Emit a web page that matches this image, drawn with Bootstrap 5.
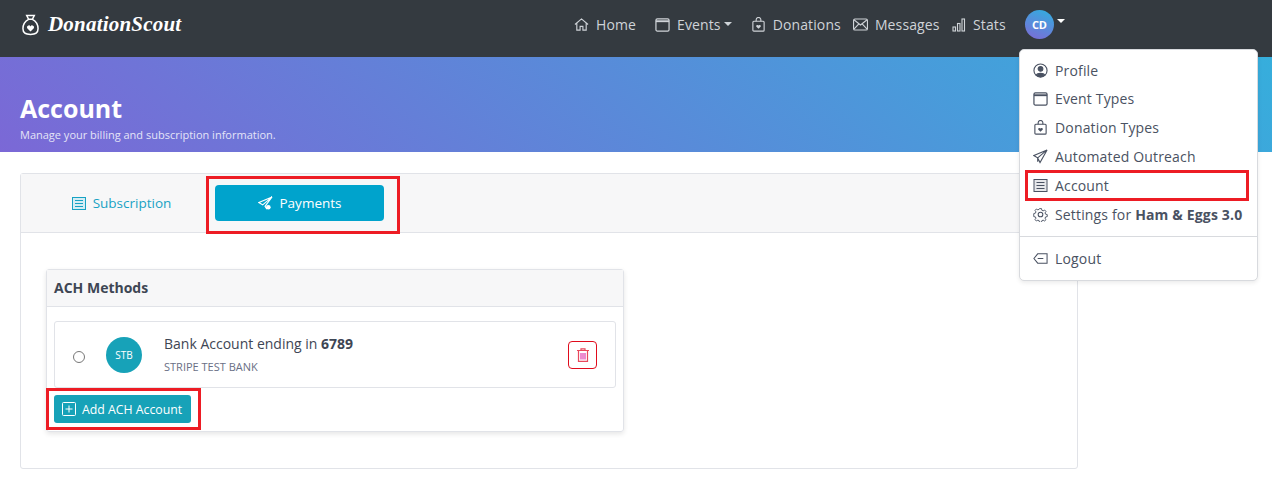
<!DOCTYPE html>
<html lang="en"><head><meta charset="utf-8"><title>Account</title>
<link href="https://cdn.jsdelivr.net/npm/bootstrap@5.3.0/dist/css/bootstrap.min.css" rel="stylesheet">
<style>
html,body{height:482px;overflow:hidden}
body{font-family:"Open Sans","Liberation Sans",sans-serif;font-size:14px;color:#3e4654;background:#fff}
.ds-bar{height:57px;background:#343a40;padding:0 14px 0 22px}
.ds-brand{font-family:"Liberation Serif",serif;font-style:italic;font-weight:700;font-size:21px;letter-spacing:.2px;color:#fff;gap:9px;width:552px;margin-bottom:8px}
.ds-nav{font-size:14px;letter-spacing:.12px;color:#cfd3d8;line-height:20px;padding-bottom:8px}
.ds-nav a{color:#cfd3d8;text-decoration:none;display:flex;align-items:center;gap:7px}
.ds-nav svg{flex:none}
.ds-caret{display:inline-block;border-top:4px solid currentColor;border-left:4px solid transparent;border-right:4px solid transparent;margin-left:-4px;margin-bottom:2px}
.ds-avatar{width:29px;height:29px;border-radius:50%;background:linear-gradient(20deg,#7f69d6,#2fb0e0);color:#fff;font-size:11px;font-weight:700;line-height:29px;text-align:center;letter-spacing:-.2px}
.ds-hero{height:95px;background:linear-gradient(40deg,#7b68d6 0%,#36aedc 100%);color:#fff;padding:35px 20px 0}
.ds-hero h1{font-size:25px;font-weight:700;line-height:32px;margin:0}
.ds-hero p{font-size:11px;line-height:14px;margin:4px 0 0;color:#e4e4f7}
.ds-main{padding:21px 194px 0 20px}
.ds-outer{height:296px;border:1px solid #e1e3e8;border-radius:3px}
.ds-tabs{height:59px;background:#f7f7f8;border-bottom:1px solid #e1e3e8;padding:11px 0 0 25px;gap:18px}
.ds-tab{height:36px;width:151px;border-radius:4px;color:#17a2c4;gap:7px;font-size:13.5px;padding-top:1px}
.ds-tab.ds-on{width:169px;background:#00a3cc;color:#fff;font-weight:500}
.ds-mark{position:absolute;border:3px solid #ed1c24;pointer-events:none}
.ds-inner{width:578px;margin:36px 0 0 25px;height:163px;border:1px solid #e1e3e8;border-radius:3px;box-shadow:0 2px 5px rgba(0,0,0,.1)}
.ds-inner-h{height:37px;background:#f7f7f8;border-bottom:1px solid #e1e3e8;font-size:14px;font-weight:700;line-height:36px;padding-left:7px}
.ds-row{margin:14px 7px 7px;height:67px;border:1px solid #e1e3e8;border-radius:3px;padding-left:18px}
.ds-radio{width:12px;height:12px;border:1px solid #777;border-radius:50%;flex:none;margin:4px 21px 0 0}
.ds-stb{width:36px;height:36px;border-radius:50%;background:#17a2b8;color:#fff;font-size:10px;line-height:36px;text-align:center;flex:none;margin-right:22px}
.ds-bank{font-size:14px;line-height:18px;color:#3e4654}
.ds-sub{font-size:11px;line-height:14px;margin-top:7px;color:#6a6f85}
.ds-del{width:29px;height:28px;border:1px solid #e00b1c;border-radius:4px;background:#fff;margin:0 18px 0 auto;padding:0}
.ds-add{margin-left:7px;height:28px;width:137px;background:#17a2b8;color:#fff;border:0;border-radius:3px;font-size:12.3px;padding:2px 0 0 8px;gap:6px}
.ds-add svg{margin-top:-3px}
.ds-menu{position:absolute;left:1019px;top:49px;width:239px;height:232px;background:#fff;border:1px solid #d8dade;border-radius:5px;box-shadow:0 2px 4px rgba(0,0,0,.08);padding:5.7px 0 0;z-index:5}
.ds-item{height:28.8px;padding-left:13px;gap:7px;color:#4a5262;font-size:14px;letter-spacing:.16px;position:relative}
.ds-rule{border-top:1px solid #d8dade;margin:7.5px 0 7.5px}
</style></head><body>
<nav class="ds-bar d-flex align-items-center">
 <div class="ds-brand d-flex align-items-center">
  <svg width="17" height="24" viewBox="0 0 18 24" fill="none" stroke="#fff" stroke-width="1.6"><path d="M5 2h8l-2 4H7zM7 6C3 8 1 12 1 16c0 4 3 6 8 6s8-2 8-6c0-4-2-8-6-10"/><path fill="#fff" stroke="none" d="M9 19l-3.5-3.5a2 2 0 0 1 3.500-2 2 2 0 0 1 3.500 2z"/></svg>
  <span>DonationScout</span></div>
 <div class="ds-nav d-flex align-items-center">
  <a href="#" style="margin-right:19px"><svg width="15" height="15" viewBox="0 0 16 16" fill="none" stroke="currentColor" stroke-width="1.200"><path d="M1 8l7-6 7 6M3 6.500V14h3.500v-4h3v4H13V6.500"/></svg>Home</a>
  <a href="#" style="margin-right:19px"><svg width="15" height="15" viewBox="0 0 16 16" fill="none" stroke="currentColor" stroke-width="1.300"><rect x="1" y="2" width="14" height="13" rx="1.500"/><path stroke-width="2" d="M1 4.500h14"/></svg>Events<i class="ds-caret"></i></a>
  <a href="#" style="margin-right:12px"><svg width="15" height="15" viewBox="0 0 16 16" fill="none" stroke="currentColor" stroke-width="1.200"><rect x="2" y="4.500" width="12" height="10.500" rx="1"/><path d="M5.500 4.500V3a2.500 2.500 0 0 1 5 0v1.500"/><path fill="currentColor" stroke="none" d="M8 12.500L5.500 10a1.400 1.400 0 0 1 2.500-1 1.400 1.400 0 0 1 2.500 1z"/></svg>Donations</a>
  <a href="#" style="margin-right:12.5px"><svg width="15" height="13" viewBox="0 0 16 13" fill="none" stroke="currentColor" stroke-width="1.200"><rect x=".6" y=".6" width="14.800" height="11.800" rx="1.500"/><path d="M1 1.500l7 5.500 7-5.500M1 11.500l5-5.500M15 11.500l-5-5.500"/></svg>Messages</a>
  <a href="#" style="margin-right:19px"><svg width="14" height="14" viewBox="0 0 14 14" fill="none" stroke="currentColor" stroke-width="1.100"><rect x="1" y="9" width="2.500" height="4"/><rect x="5.500" y="5.500" width="2.500" height="7.500"/><rect x="10" y="1" width="2.500" height="12"/></svg>Stats</a>
  <a href="#" style="gap:3px;color:#fff"><span class="ds-avatar">CD</span><i class="ds-caret" style="margin:0 0 8px"></i></a>
 </div>
</nav>
<header class="ds-hero"><h1>Account</h1><p>Manage your billing and subscription information.</p></header>
<main class="ds-main">
 <section class="ds-outer">
  <div class="ds-tabs d-flex">
   <a class="ds-tab d-flex align-items-center justify-content-center text-decoration-none" href="#"><svg width="14" height="13" viewBox="0 0 14 13" fill="none" stroke="currentColor"><rect x=".5" y=".5" width="13" height="12" fill="#d5edf4"/><path d="M3 3.500h8M3 6.500h8M3 9.500h8"/></svg>Subscription</a>
   <a class="ds-tab ds-on d-flex align-items-center justify-content-center text-decoration-none position-relative" href="#"><svg width="15" height="15" viewBox="0 0 16 16" fill="none" stroke="#fff" stroke-width="1.200"><path d="M15 1L1 7l4 2.500L15 1 7.500 11l2 3"/><circle cx="11" cy="12" r="2.500" fill="#fff" stroke="none"/></svg>Payments<span class="ds-mark" style="inset:-9px -16px -13px -9px"></span></a>
  </div>
  <div class="ds-inner">
   <div class="ds-inner-h">ACH Methods</div>
   <div class="ds-row d-flex align-items-center">
    <span class="ds-radio"></span><span class="ds-stb">STB</span>
    <div><div class="ds-bank">Bank Account ending in <b>6789</b></div><div class="ds-sub">STRIPE TEST BANK</div></div>
    <button class="ds-del d-flex align-items-center justify-content-center" type="button" aria-label="Delete"><svg width="12" height="14" viewBox="0 0 12 14" fill="none" stroke="#e8485c" stroke-width="1.200"><path d="M0 2.500h12M4 2V.8h4V2M1.500 3v10.400h9V3"/><path stroke="#e040b0" d="M4 5v6.500M6 5v6.500M8 5v6.500"/></svg></button>
   </div>
   <button class="ds-add d-flex align-items-center position-relative" type="button"><svg width="14" height="14" viewBox="0 0 14 14" fill="none" stroke="#fff"><rect x=".5" y=".5" width="13" height="13" rx="1"/><path d="M7 3.500v7M3.500 7h7"/></svg>Add ACH Account<span class="ds-mark" style="inset:-7px -10px -7px -8px"></span></button>
  </div>
 </section>
</main>
<div class="ds-menu">
 <div class="ds-item d-flex align-items-center"><svg width="15" height="15" viewBox="0 0 16 16" fill="none" stroke="currentColor" stroke-width="1.200"><circle cx="8" cy="8" r="7"/><circle cx="8" cy="6.200" r="2.500" fill="currentColor"/><path fill="currentColor" d="M3.500 13c1-2.500 8-2.500 9 0-2 2-7 2-9 0z"/></svg>Profile</div>
 <div class="ds-item d-flex align-items-center"><svg width="15" height="15" viewBox="0 0 16 16" fill="none" stroke="currentColor" stroke-width="1.300"><rect x="1" y="2" width="14" height="13" rx="1.500"/><path stroke-width="2" d="M1 4.500h14"/></svg>Event Types</div>
 <div class="ds-item d-flex align-items-center"><svg width="15" height="15" viewBox="0 0 16 16" fill="none" stroke="currentColor" stroke-width="1.200"><rect x="2" y="4.500" width="12" height="10.500" rx="1"/><path d="M5.500 4.500V3a2.500 2.500 0 0 1 5 0v1.500"/><path fill="currentColor" stroke="none" d="M8 12.500L5.500 10a1.400 1.400 0 0 1 2.500-1 1.400 1.400 0 0 1 2.500 1z"/></svg>Donation Types</div>
 <div class="ds-item d-flex align-items-center"><svg width="15" height="15" viewBox="0 0 16 16" fill="none" stroke="currentColor" stroke-width="1.200"><path d="M15 1L1 7l4 2.500L15 1 7.500 14.500 5 9.500v4"/></svg>Automated Outreach</div>
 <div class="ds-item d-flex align-items-center"><svg width="15" height="13" viewBox="0 0 14 13" fill="none" stroke="currentColor"><rect x=".5" y=".5" width="13" height="12" fill="#e6e7ea"/><path d="M3 3.500h8M3 6.500h8M3 9.500h8"/></svg>Account<span class="ds-mark" style="inset:-1px 8px -1px 5px"></span></div>
 <div class="ds-item d-flex align-items-center"><svg width="15" height="15" viewBox="0 0 16 16" fill="none" stroke="currentColor" stroke-width="1.100"><circle cx="8" cy="8" r="2.500"/><path d="M6.800 1h2.400l.4 2 1.500.7 1.800-1 1.600 1.700-1.100 1.700.6 1.500 2 .5v2.400l-2 .4-.6 1.500 1.100 1.700-1.600 1.600-1.800-1-1.500.6-.4 2H6.800l-.4-2-1.500-.6-1.800 1-1.600-1.600 1.100-1.700-.6-1.500-2-.4V6.900l2-.5.600-1.500-1.100-1.700 1.600-1.700 1.800 1 1.500-.7z" transform="translate(.8 .8) scale(.9)"/></svg><span>Settings for <b>Ham &amp; Eggs 3.0</b></span></div>
 <div class="ds-rule"></div>
 <div class="ds-item d-flex align-items-center"><svg width="15" height="13" viewBox="0 0 16 13" fill="none" stroke="currentColor" stroke-width="1.100"><path d="M5 1.500h10v10H5L1 6.500zM5 6.500h6"/></svg>Logout</div>
</div>
<script src="https://cdn.jsdelivr.net/npm/bootstrap@5.3.0/dist/js/bootstrap.bundle.min.js"></script>
</body></html>
